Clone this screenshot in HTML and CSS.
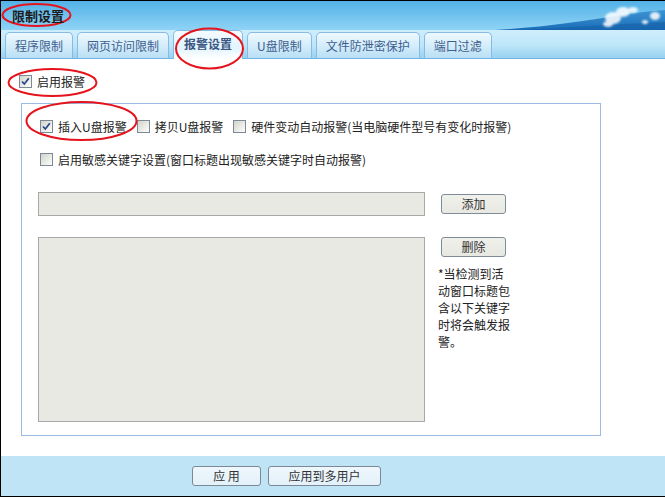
FILE: index.html
```html
<!DOCTYPE html>
<html lang="zh-CN">
<head>
<meta charset="utf-8">
<title>限制设置</title>
<link rel="stylesheet" href="styles.css">
</head>
<body>
<div class="window">
  <div class="titlebar">
    <span class="title">限制设置</span>
    <svg class="deco" width="170" height="29" viewBox="0 0 170 29">
      <defs>
        <linearGradient id="wave" x1="0" y1="0" x2="0" y2="1">
          <stop offset="0" stop-color="#3d94d4"/>
          <stop offset="1" stop-color="#1a6db6"/>
        </linearGradient>
        <filter id="blur" x="-50%" y="-50%" width="200%" height="200%"><feGaussianBlur stdDeviation="1.3"/></filter>
      </defs>
      <path d="M0 29 C50 26 90 20 120 15 C140 12 155 10 170 9 L170 29 Z" fill="url(#wave)"/>
      <path d="M30 29 C70 26 110 24 170 21 L170 29 Z" fill="#145fa6" opacity="0.55"/>
      <g fill="#ffffff" filter="url(#blur)" opacity="0.85">
        <ellipse cx="118" cy="17" rx="8" ry="6"/>
        <ellipse cx="128" cy="11" rx="7" ry="5"/>
        <ellipse cx="113" cy="23" rx="5" ry="3"/>
        <ellipse cx="138" cy="9" rx="5" ry="3"/>
        <ellipse cx="160" cy="15" rx="5" ry="4"/>
        <ellipse cx="150" cy="21" rx="3" ry="2"/>
      </g>
    </svg>
  </div>
  <div class="tabstrip">
    <div class="tab">程序限制</div>
    <div class="tab">网页访问限制</div>
    <div class="tab active">报警设置</div>
    <div class="tab">U盘限制</div>
    <div class="tab">文件防泄密保护</div>
    <div class="tab">端口过滤</div>
  </div>
  <div class="content">
    <div class="toprow">
      <span class="cb on"><svg width="11" height="11" viewBox="0 0 11 11"><path d="M2 5.5 L4.3 8 L8.8 2.2" fill="none" stroke="#25458c" stroke-width="1.7"/></svg></span>
      <span>启用报警</span>
    </div>
    <div class="group">
      <div class="row">
        <span class="item"><span class="cb on"><svg width="11" height="11" viewBox="0 0 11 11"><path d="M2 5.5 L4.3 8 L8.8 2.2" fill="none" stroke="#25458c" stroke-width="1.7"/></svg></span>插入U盘报警</span>
        <span class="item"><span class="cb"></span>拷贝U盘报警</span>
        <span class="item"><span class="cb"></span>硬件变动自动报警(当电脑硬件型号有变化时报警)</span>
      </div>
      <div class="row row2">
        <span class="item"><span class="cb"></span>启用敏感关键字设置(窗口标题出现敏感关键字时自动报警)</span>
      </div>
      <div class="kw-row">
        <div class="field"></div>
        <button class="btn">添加</button>
      </div>
      <div class="kw-row2">
        <div class="area"></div>
        <div class="side">
          <button class="btn">删除</button>
          <p class="note">*当检测到活动窗口标题包含以下关键字时将会触发报警。</p>
        </div>
      </div>
    </div>
  </div>
  <div class="footer">
    <button class="fbtn apply">应 用</button>
    <button class="fbtn multi">应用到多用户</button>
  </div>
</div>
<svg class="marks" width="665" height="497" viewBox="0 0 665 497">
  <g fill="none" stroke="#e5141c" stroke-width="2">
    <ellipse cx="36.5" cy="15" rx="34" ry="11"/>
    <ellipse cx="209.5" cy="48.5" rx="33.5" ry="20"/>
    <ellipse cx="52.5" cy="82.5" rx="44" ry="13.5"/>
    <ellipse cx="81.5" cy="121" rx="55" ry="19"/>
  </g>
</svg>
</body>
</html>
```
FILE: styles.css
```css
* { box-sizing: border-box; margin: 0; padding: 0; }
html, body { width: 665px; height: 497px; overflow: hidden; background: #fff; }
body {
  position: relative;
  font-family: "Noto Sans CJK SC", "Noto Sans", sans-serif;
  font-size: 12px;
  color: #222;
}
.window {
  height: 497px;
  border-top: 1px solid #000;
  border-left: 1px solid #000;
  border-bottom: 1px solid #000;
  display: flex;
  flex-direction: column;
}
.titlebar {
  position: relative;
  height: 29px;
  flex: none;
  display: flex;
  align-items: center;
  padding-left: 11px;
  overflow: hidden;
  background: linear-gradient(#52b2e7, #74c4ef 55%, #8fd3f5);
}
.title {
  position: relative;
  z-index: 1;
  font-size: 13px;
  font-weight: bold;
  color: #1c1c1c;
  line-height: 1;
}
.deco { position: absolute; right: 0; top: 0; }
.tabstrip {
  height: 29px;
  flex: none;
  display: flex;
  align-items: flex-end;
  gap: 4px;
  padding-left: 4px;
  background: linear-gradient(#cfeefc, #bde6f9 55%, #97d1f1);
  border-bottom: 1px solid #72b4e4;
}
.tab {
  height: 26px;
  padding: 0 9px;
  border: 1px solid #88bbe3;
  border-bottom: none;
  border-radius: 5px 5px 0 0;
  background: linear-gradient(#eef9ff, #d2ecfa 55%, #b9dff5);
  color: #40608f;
  display: flex;
  align-items: center;
  line-height: 1;
  white-space: nowrap;
}
.tab.active {
  height: 29px;
  margin-bottom: -1px;
  padding: 0 10px 2px;
  font-weight: bold;
  color: #3a5684;
  background: linear-gradient(#f4fbff, #e2f4fd 60%, #ffffff);
}
.content {
  flex: 1;
  background: #fff;
}
.toprow {
  display: flex;
  align-items: center;
  gap: 5px;
  height: 16px;
  margin: 14px 0 0 18px;
}
.cb {
  width: 13px;
  height: 13px;
  flex: none;
  border: 1px solid #7d8996;
  background: linear-gradient(135deg, #d3d3cc, #efefeb 65%, #fdfdfc);
  display: inline-flex;
  align-items: center;
  justify-content: center;
}
.group {
  margin: 14px 0 0 20px;
  width: 580px;
  height: 333px;
  border: 1px solid #9cbbe4;
  padding: 14px 0 0 16px;
}
.row {
  display: flex;
  align-items: center;
  height: 16px;
  margin-left: 2px;
  gap: 10px;
  white-space: nowrap;
}
.row2 { margin-top: 17px; }
.item { display: inline-flex; align-items: center; gap: 5px; }
.kw-row {
  display: flex;
  align-items: flex-start;
  margin-top: 25px;
}
.field {
  width: 387px;
  height: 24px;
  background: #e9e9e3;
  border: 1px solid #a8a8a8;
}
.btn {
  width: 65px;
  height: 20px;
  border: 1px solid #7f8b97;
  border-radius: 3px;
  background: linear-gradient(#f1f1ec, #e8e8e2);
  font-family: inherit;
  font-size: 12px;
  color: #333;
  line-height: 1;
}
.kw-row .btn { margin: 2px 0 0 16px; }
.kw-row2 {
  display: flex;
  align-items: flex-start;
  margin-top: 21px;
}
.area {
  width: 387px;
  height: 185px;
  background: #e9e9e3;
  border: 1px solid #a8a8a8;
}
.side {
  margin-left: 13px;
  display: flex;
  flex-direction: column;
}
.side .btn { margin-left: 3px; }
.note {
  margin-top: 8px;
  width: 74px;
  line-height: 17px;
  font-size: 12px;
  color: #222;
  word-break: break-all;
}
.footer {
  height: 40px;
  flex: none;
  background: #bfe4f6;
  display: flex;
  align-items: flex-start;
  gap: 7px;
  padding: 10px 0 0 191px;
}
.fbtn {
  height: 20px;
  border: 1px solid #7c8896;
  border-radius: 3px;
  background: linear-gradient(#eef7fc, #e3f1fa);
  font-family: inherit;
  font-size: 12px;
  color: #333;
  line-height: 1;
}
.apply { width: 69px; }
.multi { width: 113px; }
.marks {
  position: absolute;
  left: 0;
  top: 0;
  pointer-events: none;
}
```
